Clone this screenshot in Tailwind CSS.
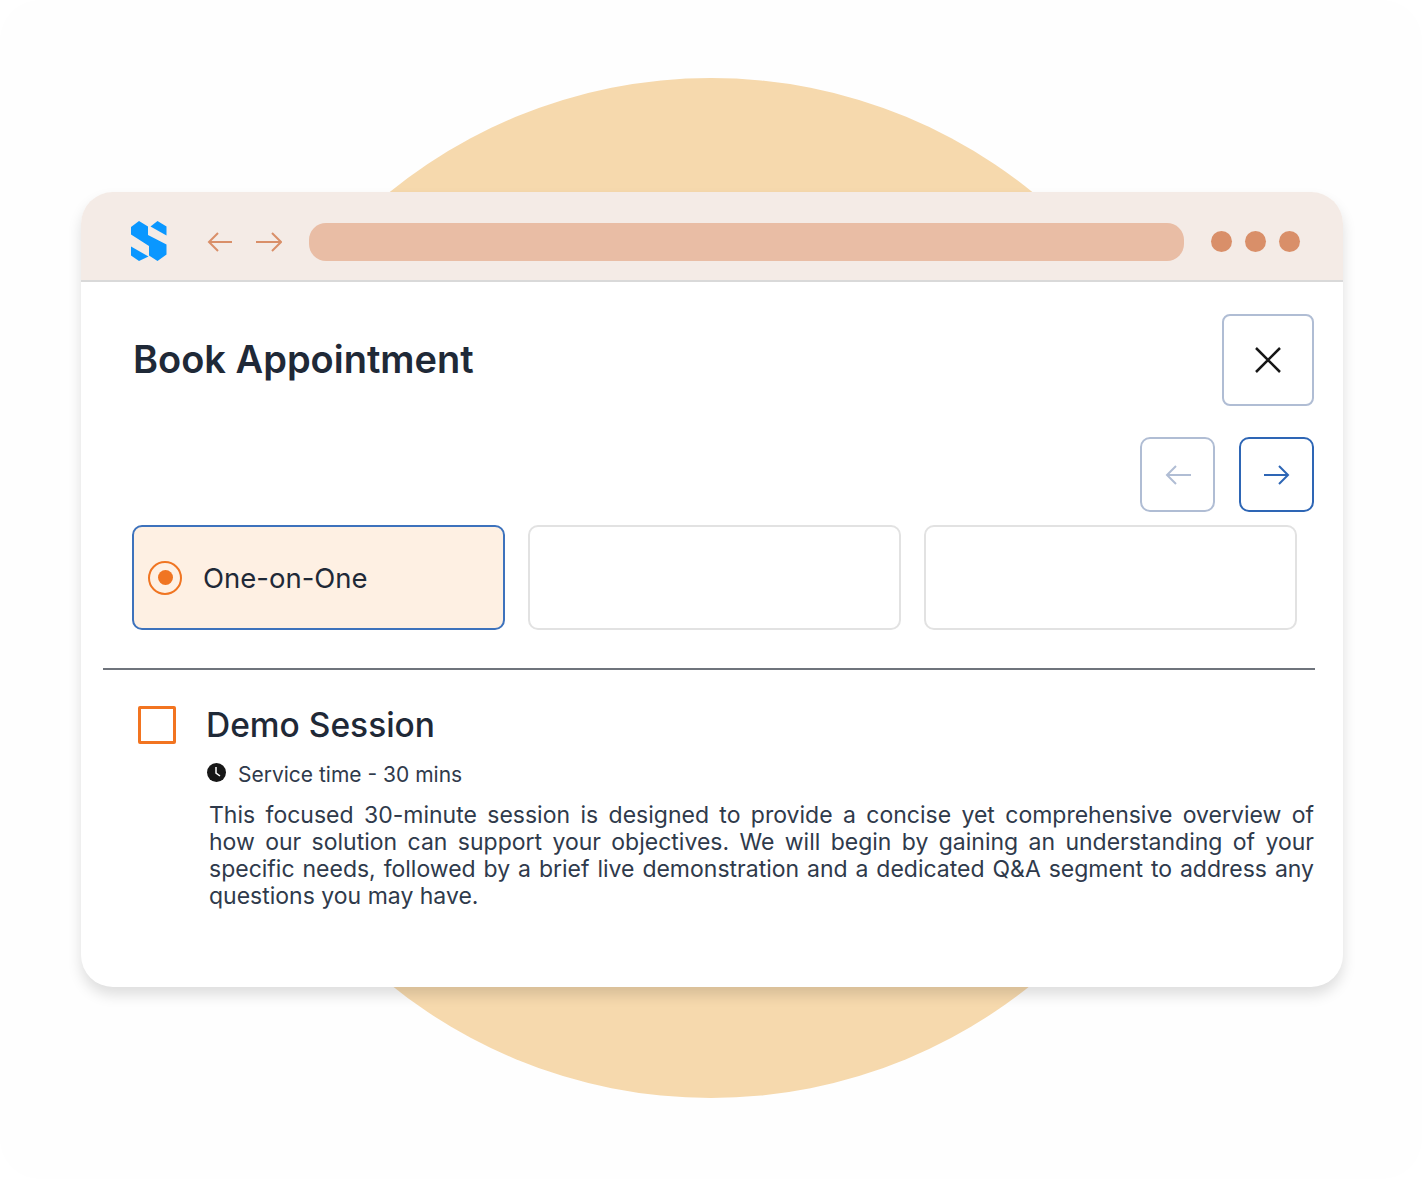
<!DOCTYPE html>
<html><head><meta charset="utf-8"><script src="https://cdn.jsdelivr.net/npm/@tailwindcss/browser@4"></script></head>
<body class="bg-white">
<main class="relative w-[1422px] h-[1179px] overflow-hidden rounded-[40px] bg-[#fefefe] pt-[192px] px-[81px] font-['Inter',sans-serif] text-[#1f2937]">
  <div class="absolute left-[201px] top-[78px] w-[1020px] h-[1020px] rounded-full bg-[#f6d9ad]"></div>
  <section class="relative w-[1262px] h-[795px] rounded-[32px] bg-white shadow-[0_8px_14px_rgba(0,0,0,0.13)] overflow-hidden">
    <header class="h-[90px] bg-[#f4ebe6] border-b-2 border-[#d9d9d9] flex items-center pl-[50px] pt-[11px]">
      <svg class="w-[36px] h-[40px] -mt-[2px]" viewBox="0 0 36 40" fill="#0a97ff"><path d="M0 6 8 0 17 5.500 17 14 35.500 23.500 35.500 33.500 26.500 40 18 34.500 18 25 0 13.500Z"/><path d="M19.500 5.500 26.500 0 35.500 5.500 35.500 14.500Z"/><path d="M0 25.500 17.500 35.500 8 40 0 34.500Z"/></svg>
      <svg class="w-[26px] h-[22px] ml-[39px]" viewBox="0 0 26 22" fill="none" stroke="#d98f69" stroke-width="2"><path d="M27 11H3M12 2 3 11l9 9"/></svg>
      <svg class="w-[26px] h-[22px] ml-[24px]" viewBox="0 0 26 22" fill="none" stroke="#d98f69" stroke-width="2"><path d="M0 11h25M16 2l9 9-9 9"/></svg>
      <div class="w-[875px] h-[38px] ml-[27px] rounded-[17px] bg-[#e9bda5]"></div>
      <div class="flex gap-[13px] ml-[27px]">
        <span class="w-[21px] h-[21px] rounded-full bg-[#d98f69]"></span>
        <span class="w-[21px] h-[21px] rounded-full bg-[#d98f69]"></span>
        <span class="w-[21px] h-[21px] rounded-full bg-[#d98f69]"></span>
      </div>
    </header>
    <div class="pl-[22px] pr-[28px]">
      <div class="flex items-center justify-between pt-[32px] pl-[30px] pr-[1px]">
        <h1 class="text-[38px] leading-[44px] font-semibold -mt-[2px]">Book Appointment</h1>
        <button class="w-[92px] h-[92px] rounded-[8px] border-2 border-[#b0bdd4] flex items-center justify-center">
          <svg class="w-[28px] h-[28px]" viewBox="0 0 28 28" fill="none" stroke="#171717" stroke-width="2.500"><path d="M2 2l24 24M26 2 2 26"/></svg>
        </button>
      </div>
      <div class="flex justify-end gap-[24px] mt-[31px] pr-[1px]">
        <button class="w-[75px] h-[75px] rounded-[10px] border-2 border-[#b0bdd4] flex items-center justify-center">
          <svg class="w-[26px] h-[22px]" viewBox="0 0 26 22" fill="none" stroke="#b0bdd4" stroke-width="2"><path d="M26 11H2M11 2 2 11l9 9"/></svg>
        </button>
        <button class="w-[75px] h-[75px] rounded-[10px] border-2 border-[#2e66b5] flex items-center justify-center">
          <svg class="w-[26px] h-[22px]" viewBox="0 0 26 22" fill="none" stroke="#2e66b5" stroke-width="2"><path d="M0 11h24M15 2l9 9-9 9"/></svg>
        </button>
      </div>
      <div class="flex gap-[23px] mt-[13px] pl-[29px]">
        <div class="w-[373px] h-[105px] rounded-[10px] border-2 border-[#3d72bc] bg-[#fef0e3] flex items-center pl-[14px]">
          <span class="w-[34px] h-[34px] rounded-full border-2 border-[#f07522] flex items-center justify-center"><span class="w-[15px] h-[15px] rounded-full bg-[#f07522]"></span></span>
          <span class="ml-[21px] text-[27.500px] leading-[34px]">One-on-One</span>
        </div>
        <div class="w-[373px] h-[105px] rounded-[10px] border-2 border-[#e2e2e2] bg-white"></div>
        <div class="w-[373px] h-[105px] rounded-[10px] border-2 border-[#e2e2e2] bg-white"></div>
      </div>
      <hr class="mt-[38px] h-[2px] border-0 bg-[#6f747c]">
      <div class="flex mt-[35px] pl-[35px]">
        <span class="shrink-0 w-[38px] h-[38px] mt-[1px] rounded-[2px] border-[3px] border-[#f27420]"></span>
        <div class="ml-[30px] flex-1 min-w-0 pr-[1px]">
          <h2 class="text-[33.500px] leading-[40px] font-medium">Demo Session</h2>
          <div class="flex items-center mt-[16px] gap-[12px] h-[26px]">
            <svg class="w-[19px] h-[19px] shrink-0 ml-[1px] -mt-[3px]" viewBox="0 0 19 19"><circle cx="9.500" cy="9.500" r="9.500" fill="#171717"/><path d="M9 4v6l4 3" fill="none" stroke="#fff" stroke-width="1.500"/></svg>
            <span class="text-[21px] leading-[26px] pt-[1px] text-[#2f3a4b]">Service time - 30 mins</span>
          </div>
          <p class="mt-[15px] ml-[3px] text-[23px] leading-[27px] text-justify text-[#2f3a4b]">This focused 30-minute session is designed to provide a concise yet comprehensive overview of how our solution can support your objectives. We will begin by gaining an understanding of your specific needs, followed by a brief live demonstration and a dedicated Q&amp;A segment to address any questions you may have.</p>
        </div>
      </div>
    </div>
  </section>
</main>
</body></html>
